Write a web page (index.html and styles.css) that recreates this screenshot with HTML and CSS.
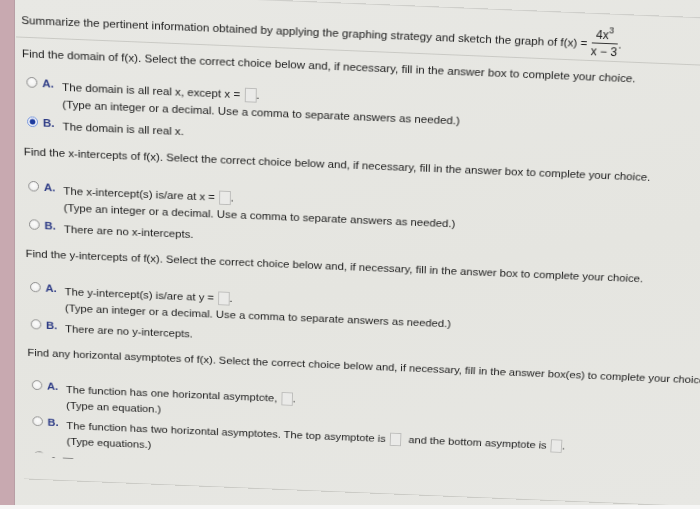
FILE: index.html
```html
<!DOCTYPE html>
<html lang="en">
<head>
<meta charset="utf-8">
<title>Graphing strategy</title>
<link rel="stylesheet" href="styles.css">
</head>
<body>
<div class="strip"></div>
<main class="sheet">
  <div class="topline"></div>
  <div class="title-row">
    <span>Summarize the pertinent information obtained by applying the graphing strategy and sketch the graph of f(x) =</span>
    <span class="frac"><span class="num">4x<sup>3</sup></span><span class="den">x − 3</span></span>
    <span class="dot">.</span>
  </div>
  <div class="sep"></div>

  <section class="q first">
    <p class="prompt">Find the domain of f(x). Select the correct choice below and, if necessary, fill in the answer box to complete your choice.</p>
    <div class="opt">
      <span class="radio"></span><span class="lbl">A.</span>
      <div class="txt"><div>The domain is all real x, except x = <span class="box"></span>.</div><div>(Type an integer or a decimal. Use a comma to separate answers as needed.)</div></div>
    </div>
    <div class="opt">
      <span class="radio on"></span><span class="lbl">B.</span>
      <div class="txt"><div>The domain is all real x.</div></div>
    </div>
  </section>

  <section class="q">
    <p class="prompt">Find the x-intercepts of f(x). Select the correct choice below and, if necessary, fill in the answer box to complete your choice.</p>
    <div class="opt">
      <span class="radio"></span><span class="lbl">A.</span>
      <div class="txt"><div>The x-intercept(s) is/are at x = <span class="box"></span>.</div><div>(Type an integer or a decimal. Use a comma to separate answers as needed.)</div></div>
    </div>
    <div class="opt">
      <span class="radio"></span><span class="lbl">B.</span>
      <div class="txt"><div>There are no x-intercepts.</div></div>
    </div>
  </section>

  <section class="q">
    <p class="prompt">Find the y-intercepts of f(x). Select the correct choice below and, if necessary, fill in the answer box to complete your choice.</p>
    <div class="opt">
      <span class="radio"></span><span class="lbl">A.</span>
      <div class="txt"><div>The y-intercept(s) is/are at y = <span class="box"></span>.</div><div>(Type an integer or a decimal. Use a comma to separate answers as needed.)</div></div>
    </div>
    <div class="opt">
      <span class="radio"></span><span class="lbl">B.</span>
      <div class="txt"><div>There are no y-intercepts.</div></div>
    </div>
  </section>

  <section class="q">
    <p class="prompt">Find any horizontal asymptotes of f(x). Select the correct choice below and, if necessary, fill in the answer box(es) to complete your choice.</p>
    <div class="opt">
      <span class="radio"></span><span class="lbl">A.</span>
      <div class="txt"><div>The function has one horizontal asymptote, <span class="box"></span>.</div><div>(Type an equation.)</div></div>
    </div>
    <div class="opt">
      <span class="radio"></span><span class="lbl">B.</span>
      <div class="txt"><div>The function has two horizontal asymptotes. The top asymptote is <span class="box"></span><span class="gap"></span>and the bottom asymptote is <span class="box"></span>.</div><div>(Type equations.)</div></div>
    </div>
    <div class="more"><span>⌒</span><span>-</span><span>—</span></div>
  </section>

  <div class="bottomline"></div>
</main>
</body>
</html>
```

FILE: styles.css
```css
html, body {
  margin: 0;
  padding: 0;
  height: 100%;
}

body {
  display: flex;
  align-items: flex-start;
  overflow: hidden;
  background: linear-gradient(170deg, #e8e8e4 0%, #e5e5e0 55%, #e7e7e3 100%);
  font-family: "Liberation Sans", Arial, sans-serif;
  font-size: 11.7px;
  color: #1c1c1c;
  border-bottom: 4px solid #f6f6f5;
  box-sizing: border-box;
}

.strip {
  flex: 0 0 14px;
  align-self: stretch;
  background: #c8a9b0;
  border-right: 1px solid #b89ea5;
}

/* the photographed screen: slight skew plus a tilt away at the bottom */
.sheet {
  flex: 1;
  padding-left: 6px;
  transform: skew(1.1deg, 2.35deg) perspective(1000px) rotateX(-8deg);
  transform-origin: 0 0;
  white-space: nowrap;
}

.topline {
  margin: -11px 0 0 -6px;
  border-top: 1px solid #cfcfcb;
}

.title-row {
  display: flex;
  align-items: center;
  height: 34px;
  margin-top: 12px;
}

.frac {
  display: inline-flex;
  flex-direction: column;
  align-items: center;
  margin-left: 4px;
  line-height: 16px;
  font-size: 12px;
}

.frac .num {
  padding: 0 3px;
  border-bottom: 1px solid #333;
  width: 100%;
  text-align: center;
  box-sizing: border-box;
}

.frac sup {
  font-size: 9px;
  line-height: 0;
  vertical-align: 6px;
}

.dot {
  align-self: center;
  margin-left: 1px;
}

.sep {
  margin: 1px 0 0 -6px;
  border-top: 1px solid #c9c9c4;
}

.q {
  margin-top: 10px;
}

.q.first {
  margin-top: 7px;
}

.prompt {
  margin: 0 0 19px;
  line-height: 18px;
}

.q.first .prompt {
  margin-bottom: 12px;
}

.opt {
  display: grid;
  grid-template-columns: 16px 20px auto;
  align-items: start;
  padding-left: 4px;
}

.opt + .opt {
  margin-top: 2px;
}

.radio {
  width: 11px;
  height: 11px;
  margin-top: 3px;
  border: 1px solid #878787;
  border-radius: 50%;
  box-sizing: border-box;
  background: radial-gradient(circle at 50% 40%, #fcfcfc 0%, #ebebe9 100%);
}

.radio.on {
  border: 1.5px solid #6a8ddc;
  background: radial-gradient(circle, #1d3b9e 0 2.6px, #f4f6fb 3.3px);
}

.lbl {
  line-height: 18px;
  font-weight: bold;
  color: #2d3b85;
}

.txt {
  padding-top: 3px;
  line-height: 18px;
}

.box {
  display: inline-block;
  width: 12px;
  height: 15px;
  margin-left: 1px;
  vertical-align: -4px;
  border: 1px solid #bdbdbb;
  background: #eaeae8;
  box-sizing: border-box;
}

.gap {
  display: inline-block;
  width: 8px;
}

.more {
  display: flex;
  gap: 8px;
  margin-top: 3px;
  padding: 0 0 0 5px;
  line-height: 12px;
  color: #5f5f5f;
  font-size: 11px;
}

.bottomline {
  margin: 21px 0 0 -6px;
  border-top: 1px solid #cbcbc6;
}
```
